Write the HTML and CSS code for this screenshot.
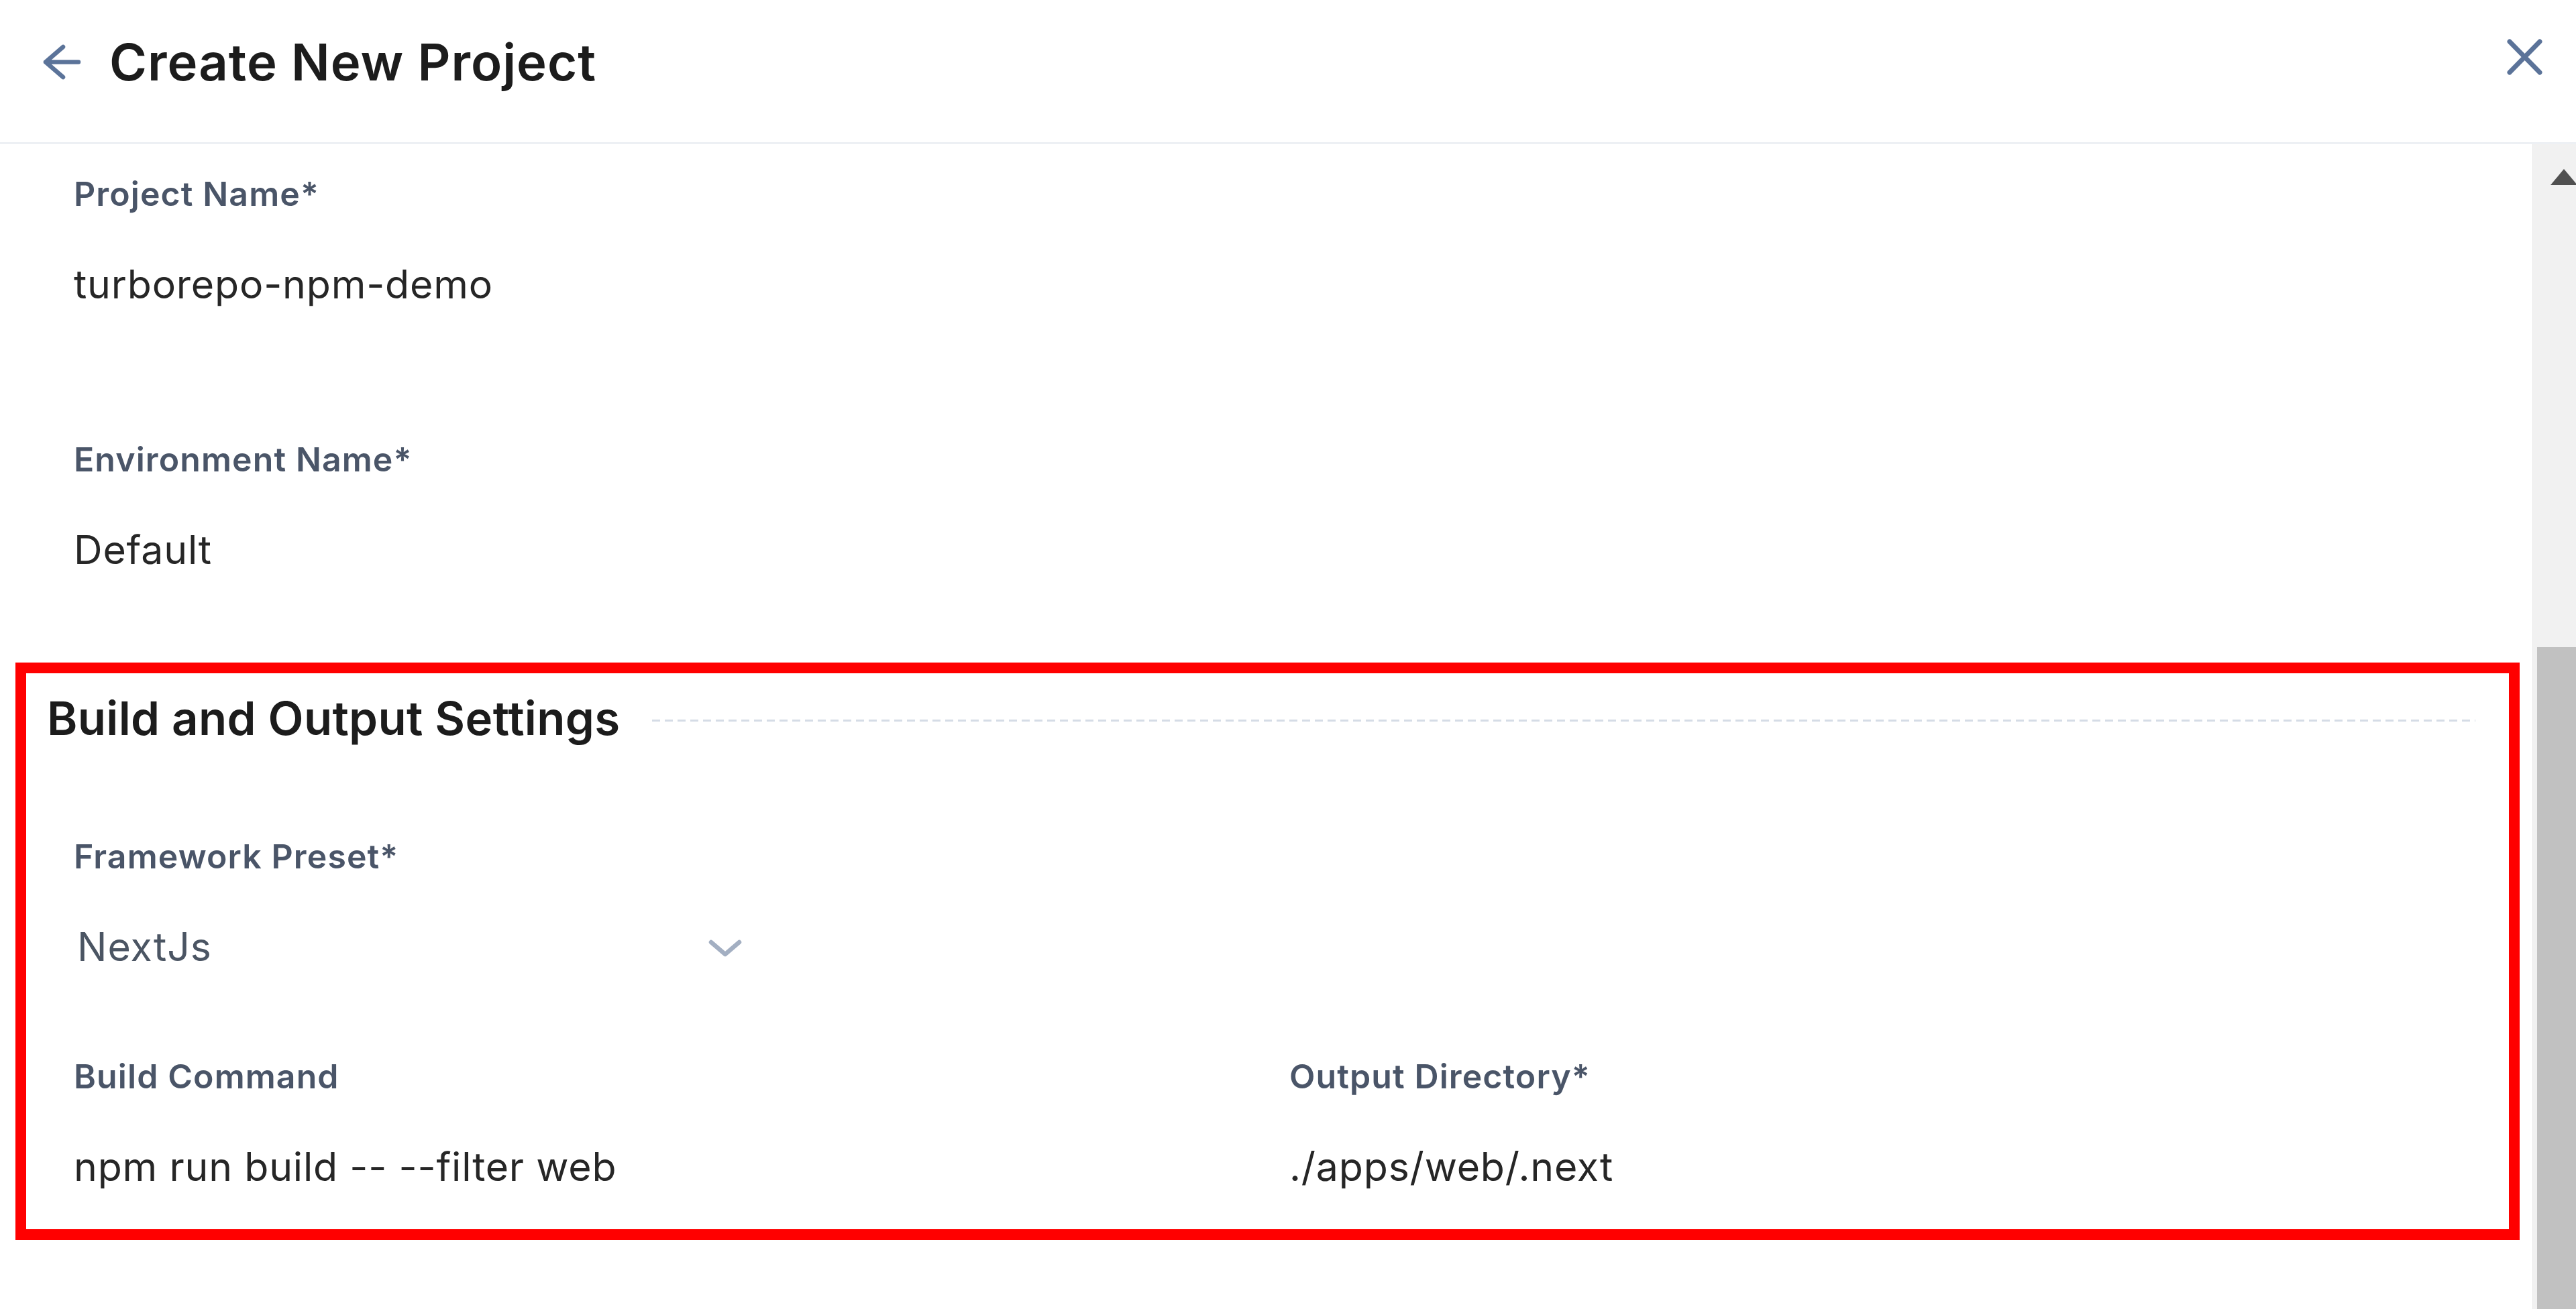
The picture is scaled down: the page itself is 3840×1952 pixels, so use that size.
FILE: index.html
```html
<!DOCTYPE html>
<html lang="en">
<head>
<meta charset="utf-8">
<title>Create New Project</title>
<link rel="stylesheet" href="styles.css">
</head>
<body>
<header class="header">
  <div class="header-left">
    <svg class="icon-back" viewBox="0 0 57 53" aria-hidden="true">
      <path d="M4 26.5 H53 M30 4 L4 26.5 L30 49" fill="none" stroke="#5b7399" stroke-width="6.5" stroke-linecap="round" stroke-linejoin="round"/>
    </svg>
    <h1 class="title">Create New Project</h1>
  </div>
  <svg class="icon-close" viewBox="0 0 53 54" aria-hidden="true">
    <path d="M4 4 L49 50 M49 4 L4 50" fill="none" stroke="#5b7399" stroke-width="7" stroke-linecap="round"/>
  </svg>
</header>
<div class="page">
  <main class="content">
    <div class="field outer">
      <div class="label">Project Name*</div>
      <div class="value">turborepo-npm-demo</div>
    </div>
    <div class="field outer">
      <div class="label">Environment Name*</div>
      <div class="value">Default</div>
    </div>
    <section class="section">
      <div class="section-head">
        <h2 class="section-title">Build and Output Settings</h2>
        <div class="dash"></div>
      </div>
      <div class="section-body">
        <div class="field">
          <div class="label">Framework Preset*</div>
          <div class="select">
            <span class="select-value">NextJs</span>
            <svg class="icon-chevron" viewBox="0 0 50 26" aria-hidden="true">
              <path d="M4 4 L25 22 L46 4" fill="none" stroke="#a3afc2" stroke-width="6.5" stroke-linecap="round" stroke-linejoin="round"/>
            </svg>
          </div>
        </div>
        <div class="grid">
          <div class="field">
            <div class="label">Build Command</div>
            <div class="value">npm run build -- --filter web</div>
          </div>
          <div class="field">
            <div class="label">Output Directory*</div>
            <div class="value">./apps/web/.next</div>
          </div>
        </div>
      </div>
    </section>
  </main>
  <div class="scrollbar">
    <div class="scroll-up"></div>
    <div class="scroll-thumb"></div>
  </div>
</div>
</body>
</html>
```
FILE: styles.css
```css
* { box-sizing: border-box; }
html, body {
  margin: 0;
  padding: 0;
  width: 3840px;
  height: 1952px;
  overflow: hidden;
  background: #ffffff;
  font-family: Inter, "Noto Sans", "Liberation Sans", sans-serif;
}
.header {
  height: 215px;
  display: flex;
  justify-content: space-between;
  align-items: flex-start;
  border-bottom: 3px solid #edf0f4;
  padding: 48px 50px 0 64px;
}
.header-left {
  display: flex;
  align-items: center;
  gap: 42px;
}
.icon-back {
  width: 57px;
  height: 53px;
  display: block;
}
.title {
  margin: 0;
  font-size: 76px;
  line-height: 88px;
  font-weight: 600;
  color: #1c1c1c;
  letter-spacing: 1px;
}
.icon-close {
  width: 53px;
  height: 54px;
  margin-top: 10px;
  display: block;
}
.page {
  display: flex;
  height: 1737px;
}
.content {
  flex: 1;
  padding: 44px 19px 0 23px;
}
.field.outer { padding-left: 87px; }
.field.outer + .field.outer { margin-top: 196px; }
.label {
  font-size: 50px;
  line-height: 60px;
  font-weight: 600;
  color: #4a5568;
  letter-spacing: 1.1px;
  white-space: nowrap;
}
.value {
  margin-top: 70px;
  font-size: 59px;
  line-height: 70px;
  font-weight: 400;
  color: #262626;
  letter-spacing: 0.8px;
  white-space: nowrap;
}
.section {
  margin-top: 133px;
  border: 16px solid #ff0000;
  padding: 27px 50px 58px 31px;
}
.section-head {
  display: flex;
  align-items: center;
  gap: 48px;
}
.section-title {
  margin: 0;
  font-size: 69px;
  line-height: 80px;
  font-weight: 600;
  color: #1c1c1c;
  letter-spacing: 0.3px;
  white-space: nowrap;
}
.dash {
  flex: 1;
  height: 3px;
  margin-top: 6px;
  background: repeating-linear-gradient(to right, #d5dce6 0 12px, transparent 12px 19px);
}
.section-body {
  padding-left: 40px;
  margin-top: 136px;
}
.select {
  margin-top: 70px;
  width: 996px;
  height: 70px;
  display: flex;
  align-items: center;
  justify-content: space-between;
}
.select-value {
  padding-left: 5px;
  font-size: 59px;
  line-height: 70px;
  color: #4b5563;
  letter-spacing: 1px;
}
.icon-chevron {
  width: 50px;
  height: 26px;
  margin-top: 4px;
  display: block;
}
.grid {
  margin-top: 128px;
  display: grid;
  grid-template-columns: 1812px 1fr;
}
.scrollbar {
  width: 65px;
  background: #f1f1f1;
  border-left: 1px solid #e9e9e9;
  display: flex;
  flex-direction: column;
  overflow: hidden;
}
.scroll-up {
  margin: 37px 0 0 26px;
  width: 0;
  height: 0;
  border-left: 20px solid transparent;
  border-right: 20px solid transparent;
  border-bottom: 24px solid #505050;
}
.scroll-thumb {
  flex: 1;
  margin: 689px 0 0 6px;
  background: #c1c1c1;
}
```
